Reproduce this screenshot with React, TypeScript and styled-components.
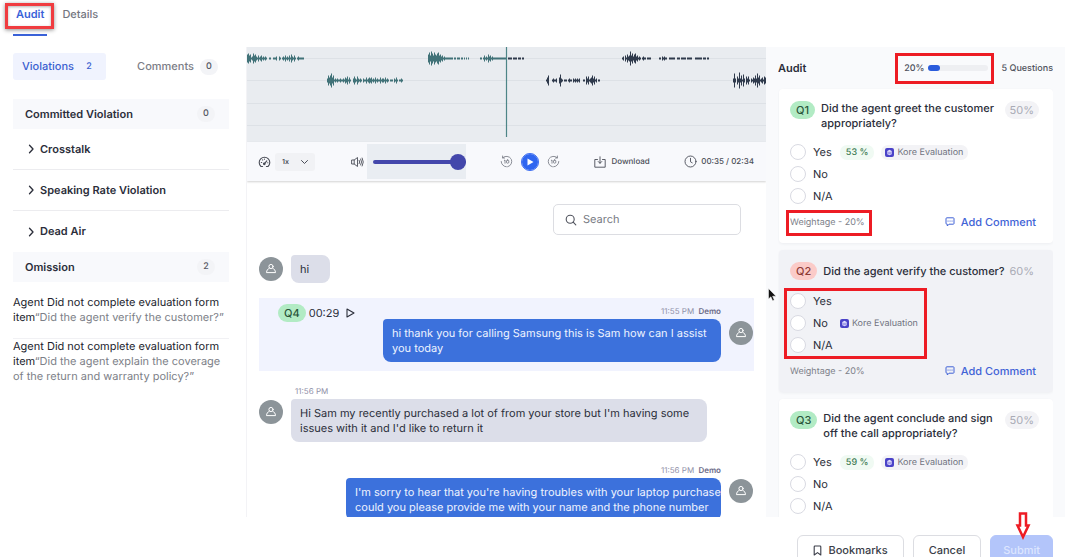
import React from "react";
import styled, { createGlobalStyle, css } from "styled-components";

const GlobalStyle = createGlobalStyle`
  *, *::before, *::after { box-sizing: border-box; }
  body {
    margin: 0;
    background: #fff;
    color: #2b2e3a;
    font-family: Inter, "Liberation Sans", sans-serif;
    font-size: 11px;
    line-height: 15px;
    text-rendering: geometricPrecision;
  }
  button, input, select { font: inherit; color: inherit; text-rendering: inherit; }
  button { cursor: pointer; }
  h2, h3, p, ul, fieldset { margin: 0; padding: 0; border: 0; font-size: inherit; }
  ul { list-style: none; }
`;

const Page = styled.div`
  display: flex;
  flex-direction: column;
  height: 100vh;
  overflow: hidden;
`;

/* ---------- shared ---------- */

const PlainButton = styled.button`
  display: inline-flex;
  align-items: center;
  padding: 0;
  border: 0;
  background: none;
`;

const Callout = styled.span<{ $inset: string; $soft?: boolean }>`
  position: absolute;
  inset: ${(p) => p.$inset};
  border: 3px solid ${(p) => (p.$soft ? "#f03c40" : "#ed1c24")};
  ${(p) => p.$soft && css`box-shadow: 0 1px 4px rgba(0, 0, 0, 0.45), inset 0 1px 3px rgba(0, 0, 0, 0.3);`}
  pointer-events: none;
`;

const Tag = styled.span<{ $tone: "green" | "red" }>`
  flex: none;
  padding: 0 6px;
  border-radius: 9px;
  line-height: 18px;
  font-weight: 500;
  color: ${(p) => (p.$tone === "green" ? "#28543a" : "#8d3a36")};
  background: ${(p) => (p.$tone === "green" ? "#b2ebc4" : "#fbcbc8")};
`;

/* ---------- top tabs ---------- */

const TopTabs = styled.nav`
  display: flex;
  flex: none;
  gap: 15px;
  height: 47px;
  padding: 0 13px;
`;

const TopTab = styled.a<{ $active?: boolean }>`
  position: relative;
  height: 36px;
  padding: 7px ${(p) => (p.$active ? "3px" : "0")} 0;
  border-bottom: 2px solid ${(p) => (p.$active ? "#3a62d8" : "transparent")};
  color: ${(p) => (p.$active ? "#3a62d8" : "#74767f")};
  font-weight: ${(p) => (p.$active ? 600 : 500)};
  text-decoration: none;
`;

const Main = styled.main`
  display: grid;
  flex: 1;
  grid-template-columns: 246px minmax(0, 1fr) 299px;
  grid-template-rows: minmax(0, 1fr);
  min-height: 0;
`;

/* ---------- violations ---------- */

const Side = styled.aside`
  padding: 6px 17px 0 13px;
  overflow: hidden;
`;

const SubTabs = styled.div`
  display: flex;
  justify-content: space-between;
  margin-bottom: 19px;
`;

const SubTab = styled(PlainButton)<{ $active?: boolean }>`
  gap: 6px;
  height: 27px;
  padding: 0 ${(p) => (p.$active ? "8px" : "11px")} 0 9px;
  border-radius: 3px;
  color: ${(p) => (p.$active ? "#3a5fd0" : "#7b7d86")};
  background: ${(p) => (p.$active ? "#f0f3fe" : "transparent")};
  font-weight: 500;
`;

const Count = styled.span<{ $plain?: boolean }>`
  min-width: 18px;
  border-radius: 8px;
  font-size: 9px;
  line-height: 16px;
  text-align: center;
  font-weight: 500;
  color: ${(p) => (p.$plain ? "#3a5fd0" : "#555863")};
  background: ${(p) => (p.$plain ? "transparent" : "#f3f4f7")};
`;

const GroupHeader = styled.h2`
  display: flex;
  align-items: center;
  justify-content: space-between;
  height: 30px;
  padding: 0 14px 0 12px;
  background: #f8f9fc;
  font-weight: 600;
`;

const GroupRow = styled.li`
  display: flex;
  height: 41px;
  padding-left: 14px;
  &:not(:last-child) { border-bottom: 1px solid #ececef; }
`;

const GroupToggle = styled(PlainButton)`
  gap: 4px;
  font-weight: 600;
`;

const OmissionList = styled.ul`
  padding-top: 13px;
`;

const Omission = styled.li`
  padding-bottom: 13px;
  color: #7d7f88;
  & + & { border-top: 1px solid #f1f1f4; }
  b { font-weight: 400; color: #22242d; }
`;

/* ---------- player ---------- */

const Center = styled.section`
  display: flex;
  flex-direction: column;
  border-left: 1px solid #f3f3f6;
  overflow: hidden;
`;

const Wave = styled.svg`
  display: block;
  flex: none;
  width: 100%;
  height: 95px;
  background: #e9ecf0;
`;

const Controls = styled.div`
  display: flex;
  flex: none;
  align-items: center;
  height: 39px;
  padding: 0 12px 0 11px;
  background: #f8f9fc;
  box-shadow: 0 1px 2px rgba(0, 0, 0, 0.18);
  color: #4a4d57;
  svg { flex: none; }
`;

const SpeedBox = styled.label`
  display: flex;
  align-items: center;
  width: 40px;
  height: 18px;
  margin: 0 36px 0 4px;
  padding: 0 6px 0 7px;
  border-radius: 3px;
  background: #f1f2f5;
`;

const Speed = styled.select`
  flex: 1;
  min-width: 0;
  padding: 0;
  border: 0;
  appearance: none;
  background: none;
  font-size: 7px;
  font-weight: 600;
`;

const VolumeBox = styled.div`
  display: flex;
  align-items: center;
  height: 35px;
  width: 99px;
  margin-left: 3px;
  padding-left: 6px;
  background: #e9edf2;
`;

const Volume = styled.input`
  width: 93px;
  height: 16px;
  margin: 0;
  appearance: none;
  background: none;
  &::-webkit-slider-runnable-track {
    height: 4px;
    border-radius: 2px;
    background: #4347ab;
  }
  &::-webkit-slider-thumb {
    width: 16px;
    height: 16px;
    margin-top: -6px;
    appearance: none;
    border-radius: 50%;
    background: #4347ab;
  }
`;

const Transport = styled.div`
  display: flex;
  align-items: center;
  gap: 8px;
  margin-left: 34px;
  color: #70737d;
`;

const PlayButton = styled(PlainButton)`
  justify-content: center;
  width: 18px;
  height: 18px;
  border: 1px solid #c9d8ff;
  border-radius: 50%;
  outline: 1px solid #3c6df0;
  outline-offset: -1px;
  background: #2f66f0;
  color: #fff;
`;

const Download = styled(PlainButton)`
  gap: 5px;
  margin: 0 auto;
  font-size: 8px;
  font-weight: 500;
`;

const Time = styled.span`
  display: flex;
  align-items: center;
  gap: 4px;
  font-size: 8px;
  font-weight: 500;
`;

/* ---------- chat ---------- */

const SearchBox = styled.label`
  display: flex;
  flex: none;
  align-items: center;
  align-self: flex-end;
  gap: 6px;
  width: 188px;
  height: 31px;
  margin: 23px 25px 20px;
  padding: 0 11px;
  border: 1px solid #dcdde2;
  border-radius: 5px;
  color: #50535d;
`;

const SearchInput = styled.input`
  flex: 1;
  min-width: 0;
  padding: 0;
  border: 0;
  outline: 0;
  background: none;
  &::placeholder { color: #777a83; opacity: 1; }
`;

const Message = styled.div<{ $agent?: boolean; $marked?: boolean }>`
  display: flex;
  flex: none;
  flex-direction: ${(p) => (p.$agent ? "row-reverse" : "row")};
  gap: 8px;
  margin: 0 12px 15px;
  ${(p) => p.$agent && css`padding: 6px 1px 0 0;`}
  ${(p) => p.$marked && css`
    margin-bottom: 13px;
    padding-bottom: 9px;
    background: #f1f3fe;
  `}
`;

const Avatar = styled.span<{ $top: number }>`
  display: flex;
  flex: none;
  align-items: center;
  justify-content: center;
  width: 24px;
  height: 24px;
  margin-top: ${(p) => p.$top}px;
  border-radius: 50%;
  background: #8c9499;
  color: #fff;
`;

const Body = styled.div<{ $agent?: boolean }>`
  display: flex;
  flex-direction: column;
  align-items: ${(p) => (p.$agent ? "flex-end" : "flex-start")};
`;

const Meta = styled.span<{ $agent?: boolean }>`
  padding: 0 ${(p) => (p.$agent ? "0" : "4px")};
  color: #8f90a8;
  font-size: 8px;
  b { margin-left: 2px; font-weight: 600; color: #6d6c88; }
`;

const Bubble = styled.p<{ $agent?: boolean; $width?: number }>`
  width: ${(p) => (p.$width ? `${p.$width}px` : "auto")};
  padding: ${(p) => (p.$width ? "7px 0 6px 9px" : "7px 21px 6px 9px")};
  border-radius: 4px 8px 8px 8px;
  color: ${(p) => (p.$agent ? "#eef3ff" : "#2b2e3a")};
  background: ${(p) => (p.$agent ? "#3c71dc" : "#dcdee9")};
  white-space: pre;
`;

const Marker = styled.div`
  display: flex;
  align-items: center;
  align-self: flex-start;
  gap: 3px;
  margin-right: auto;
  padding-left: 19px;
  svg { margin-left: 4px; }
`;

/* ---------- audit form ---------- */

const Audit = styled.section`
  position: relative;
  padding: 0 12px;
  background: #f9fafc;
`;

const Clip = styled.div`
  height: 100%;
  overflow: hidden;
`;

const AuditHeader = styled.header`
  display: flex;
  align-items: center;
  height: 42px;
  h2 { margin-right: auto; font-weight: 600; }
`;

const Progress = styled.div`
  position: relative;
  display: flex;
  align-items: center;
  gap: 3px;
  margin-right: 14px;
  color: #4f525d;
  font-size: 9px;
  font-weight: 500;
`;

const Bar = styled.span`
  width: 60px;
  height: 6px;
  border-radius: 3px;
  background: #eeeff2;
`;

const BarFill = styled.span`
  display: block;
  height: 100%;
  border-radius: 3px;
  background: #2a5cdc;
`;

const Total = styled.span`
  color: #50535d;
  font-size: 9px;
  font-weight: 500;
`;

const Card = styled.article<{ $shaded?: boolean }>`
  margin: 0 0 7px 1px;
  padding: 12px 14px 12px 11px;
  border-radius: 4px;
  background: ${(p) => (p.$shaded ? "#f1f2f6" : "#fff")};
  box-shadow: 0 1px 3px rgba(40, 44, 60, 0.06);
`;

const Question = styled.header`
  display: flex;
  align-items: flex-start;
  gap: 6px;
  margin-bottom: 10px;
`;

const QuestionTitle = styled.h3<{ $single?: boolean }>`
  flex: 1;
  min-width: 0;
  font-weight: 500;
  ${(p) => p.$single && css`
    line-height: 18px;
    white-space: nowrap;
  `}
`;

const Score = styled.span<{ $bare?: boolean }>`
  padding: 0 5px;
  border-radius: 9px;
  line-height: 18px;
  color: #a9abb5;
  background: ${(p) => (p.$bare ? "none" : "#f3f3f6")};
`;

const Options = styled.fieldset`
  position: relative;
  min-width: 0;
`;

const Option = styled.div`
  display: flex;
  align-items: center;
  height: 22px;
  label { display: flex; align-items: center; gap: 7px; }
`;

const Radio = styled.input`
  width: 16px;
  height: 16px;
  margin: 0;
  border: 1px solid #d9dae2;
  border-radius: 50%;
  appearance: none;
  background: #fff;
`;

const Match = styled.span`
  margin-left: 8px;
  padding: 0 6px;
  border-radius: 7px;
  background: #f0faf3;
  color: #3d7a52;
  font-size: 9px;
  font-weight: 500;
`;

const Source = styled.span<{ $bare?: boolean }>`
  display: flex;
  align-items: center;
  gap: 3px;
  margin-left: ${(p) => (p.$bare ? 8 : 7)}px;
  padding: 0 5px 0 4px;
  border-radius: 7px;
  background: ${(p) => (p.$bare ? "none" : "#f3f3f6")};
  color: #70737f;
  font-size: 9px;
`;

const CardFooter = styled.footer`
  display: flex;
  align-items: center;
  justify-content: space-between;
  height: 18px;
  margin-top: 6px;
`;

const Weight = styled.span`
  position: relative;
  color: #7d8089;
  font-size: 9px;
`;

const AddComment = styled(PlainButton)`
  gap: 6px;
  margin-right: 3px;
  color: #4163d6;
  font-weight: 500;
`;

/* ---------- footer ---------- */

const Actions = styled.footer`
  display: flex;
  flex: none;
  justify-content: flex-end;
  gap: 9px;
  height: 40px;
  padding: 18px 12px 0;
`;

const Action = styled.button<{ $primary?: boolean; $pad: number }>`
  position: relative;
  display: flex;
  flex: none;
  align-items: center;
  gap: 6px;
  height: 31px;
  padding: 0 ${(p) => p.$pad}px;
  border: 1px solid ${(p) => (p.$primary ? "#b3c5fa" : "#dcdde2")};
  border-radius: 6px;
  color: ${(p) => (p.$primary ? "#dde6ff" : "#3a3d48")};
  background: ${(p) => (p.$primary ? "#b3c5fa" : "#fff")};
  font-weight: 500;
`;

const Arrow = styled.svg`
  position: absolute;
  top: -24px;
  left: 25px;
  overflow: visible;
`;

const Cursor = styled.svg`
  position: absolute;
  top: 241px;
  left: 2px;
`;

/* ---------- drawings ---------- */

const line = { fill: "none", stroke: "currentColor", strokeLinecap: "round" as const, strokeLinejoin: "round" as const };

const Chevron = ({ down }: { down?: boolean }) => (
  <svg width="9" height="10" viewBox="0 0 9 10" {...line} strokeWidth={down ? 1 : 1.3}>
    <path d={down ? "M1.5 3.5 4.5 6.5 7.5 3.5" : "M2.5 1.2 6 5 2.5 8.8"} />
  </svg>
);

const PersonIcon = () => (
  <svg width="12" height="12" viewBox="0 0 12 12" {...line} strokeWidth="1">
    <circle cx="6" cy="3.5" r="2.1" />
    <path d="M4.3 5.2C2.6 6 1.6 7.5 1.5 9.6h9C10.4 7.5 9.4 6 7.7 5.2" />
  </svg>
);

const GaugeIcon = () => (
  <svg width="13" height="12" viewBox="0 0 13 12" {...line} strokeWidth="1.1">
    <path d="M3 10.5A5.3 5.3 0 1 1 10 10.5M3 10.5h1.600M10 10.5H8.400M6.500 7.600 8.800 4.800M3.300 6.500h.4M4.500 3.800l.2.2M6.500 3v.3M9.700 6.700h.2" />
    <circle cx="6.3" cy="7.8" r="0.8" fill="currentColor" />
  </svg>
);

const SpeakerIcon = () => (
  <svg width="13" height="12" viewBox="0 0 13 12" {...line} strokeWidth="0.9">
    <path d="M1 4h2.2L6.500 1.500v9L3.200 8H1zM3.200 4v4M8.200 4.300q1 1.700 0 3.400M9.700 3q1.900 3 0 6M11.200 2q2.300 4 0 8" />
  </svg>
);

const SkipIcon = ({ back }: { back?: boolean }) => (
  <svg width="13" height="13" viewBox="0 0 13 13" {...line} strokeWidth="0.8">
    <path d={back ? "M2.8 2.700A5.300 5.300 0 1 1 1.200 6.500M2.600 1v2h2" : "M10.200 2.700A5.300 5.300 0 1 0 11.800 6.500M10.400 1v2h-2"} strokeDasharray="9 1.200" />
    <path d="M4.300 5.400 5 5v3.200" />
    <rect x="6.500" y="5" width="2.300" height="3.200" rx="1" />
  </svg>
);

const DownloadIcon = () => (
  <svg width="12" height="12" viewBox="0 0 12 12" {...line} strokeWidth="0.9">
    <path d="M3.500 3.500H.8v7.700h10.400V3.500H8.500M6 .8v6.400M4.200 5.500 6 7.300l1.800-1.800" />
  </svg>
);

const ClockIcon = () => (
  <svg width="13" height="13" viewBox="0 0 13 13" {...line} strokeWidth="0.9">
    <circle cx="6.5" cy="6.5" r="5.5" />
    <path d="M6.500 3.300v3.500l1.700 1" />
  </svg>
);

const SearchIcon = () => (
  <svg width="12" height="12" viewBox="0 0 12 12" {...line} strokeWidth="1.1">
    <circle cx="5.2" cy="5.2" r="4" />
    <path d="m8.200 8.200 2.600 2.600" />
  </svg>
);

const KoreIcon = () => (
  <svg width="9" height="9" viewBox="0 0 9 9">
    <rect width="9" height="9" rx="2" fill="#4a42c8" />
    <path d="M2.300 3 4.500 1.800 6.700 3v3.200L4.500 7.300 2.300 6.200z" fill="#e4e2ff" />
    <path d="M2.800 4.300h3.400M2.800 5.700h3.400" stroke="#4a42c8" strokeWidth="0.5" />
  </svg>
);

const CommentIcon = () => (
  <svg width="10" height="10" viewBox="0 0 10 10" {...line} strokeWidth="1">
    <path d="M1 1.500q0-.7.700-.7h6.600q.7 0 .7.700v5q0 .7-.7.700H4L2.300 9V7.200h-.6Q1 7.200 1 6.500z" />
    <path d="M3 4h.1M5 4h.1M7 4h.1" strokeWidth="1.2" />
  </svg>
);

const BookmarkIcon = () => (
  <svg width="9" height="11" viewBox="0 0 9 11" {...line} strokeWidth="1.1">
    <path d="M1.200 1.800q0-.8.800-.8h5q.8 0 .8.800V10L4.500 7.600 1.200 10z" />
  </svg>
);

/* Half-heights of consecutive bars, drawn at a fixed stride along a channel. */
type Burst = { x: number; y: number; color: string; bars: number[] };

const TEAL = "#417278";
const NAVY = "#2f3a4c";

const bursts: Burst[] = [
  { x: 1, y: 11, color: TEAL, bars: [4, 5, 3, 4, 1, 2, 5, 3, 4, 2, 1, 3, 1, 2, 3, 1, 2, 1, 2, 1, 0, 0, 1, 1, 0, 0, 1, 1, 1, 2, 0, 0, 2, 1, 0, 1, 2, 1, 3, 1, 2, 1, 3, 1, 4, 2, 1, 3, 1, 0, 1, 2, 1, 1, 1, 1, 1] },
  { x: 81, y: 33, color: TEAL, bars: [2, 5, 3, 5, 7, 3, 5, 1, 2, 1, 2, 1, 1, 2, 1, 1, 2, 1, 3, 2, 4, 1, 3, 1, 0, 0, 2, 4, 2, 1, 4, 2, 1, 2, 1, 0, 2, 1, 1, 3, 1, 2, 3, 2, 3, 1, 2, 1, 3, 1, 2, 1, 1, 3, 1, 2, 2, 1, 3, 1, 2, 1, 0, 1, 1, 1, 0, 2, 1, 3, 1, 0, 1, 1, 2, 1] },
  { x: 182, y: 11, color: TEAL, bars: [4, 6, 3, 7, 5, 3, 6, 4, 3, 5, 6, 3, 4, 2, 3, 1, 2, 1, 1, 1, 1, 1, 1, 1, 1, 0, 1, 1, 0, 1, 1, 1, 0, 1, 1, 0, 1, 0, 1, 0, 1, 0] },
  { x: 234, y: 11, color: TEAL, bars: [1, 1, 0, 1, 3, 1, 2, 1, 4, 2, 3, 1, 2, 1, 1, 1, 1, 1, 1, 1, 1, 1, 1, 1, 1, 1] },
  { x: 260, y: 11, color: NAVY, bars: [1, 0, 1, 1, 1, 1, 0, 1, 1, 1, 1, 0, 1, 1, 1, 0, 1, 1] },
  { x: 300, y: 33, color: NAVY, bars: [1, 3, 5, 0, 0, 0, 1, 2, 1, 1, 2, 0, 0, 3, 6, 2, 1, 0, 1, 1, 1, 0, 1, 2, 1, 1, 0, 2, 1, 2, 1, 2, 1, 2, 0, 0, 0, 1, 1, 0, 4, 2, 4, 1, 2, 3, 5, 2, 4, 1, 2, 0, 1, 1] },
  { x: 376, y: 11, color: NAVY, bars: [1, 2, 0, 3, 1, 4, 2, 3, 7, 3, 5, 2, 4, 5, 2, 3, 1, 2, 1, 0, 1, 2, 1, 1, 0, 1, 1, 1, 1] },
  { x: 413, y: 11, color: NAVY, bars: [1, 1, 0, 2, 1, 2, 1, 1, 0, 0, 1, 1, 1, 1, 1, 1, 0, 0, 1, 1, 1, 0, 1, 1, 1, 1, 1, 0, 1, 1, 1, 1, 1, 0, 0, 0, 1, 1, 1, 1, 1, 1, 1, 0, 1, 1, 1, 0, 1, 1] },
  { x: 487, y: 33, color: NAVY, bars: [2, 7, 2, 0, 4, 2, 8, 2, 5, 1, 6, 2, 0, 4, 2, 4, 1, 0, 2, 1, 3, 2, 5, 2, 7, 3, 5, 1, 2, 3, 1, 4, 3] },
];

const Waveform = () => (
  <Wave viewBox="0 0 519 95" preserveAspectRatio="none" role="img" aria-label="Call waveform">
    {[11, 33, 56, 78].map((y) => (
      <path key={y} d={`M0 ${y + 0.5}H519`} stroke="#dde1e6" />
    ))}
    {bursts.map((b) => (
      <path
        key={`${b.x}-${b.y}`}
        stroke={b.color}
        d={b.bars
          .map((h, i) => (h ? `M${b.x + i - 0.5} ${b.y - h + 0.5}V${b.y + h + 0.5}` : ""))
          .join("")}
      />
    ))}
    <path d="M259.500 0V90" stroke="#4d8587" strokeWidth="1.2" />
  </Wave>
);

/* ---------- data ---------- */

type Item = {
  id: string;
  title: string;
  score: string;
  tone: "green" | "red";
  shaded?: boolean;
  match?: string;
  source: string;
  markOptions?: boolean;
  markWeight?: boolean;
};

const questions: Item[] = [
  { id: "Q1", title: "Did the agent greet the customer appropriately?", score: "50%", tone: "green", match: "53 %", source: "Yes", markWeight: true },
  { id: "Q2", title: "Did the agent verify the customer?", score: "60%", tone: "red", shaded: true, source: "No", markOptions: true },
  { id: "Q3", title: "Did the agent conclude and sign off the call appropriately?", score: "50%", tone: "green", match: "59 %", source: "Yes" },
];

const QuestionCard = ({ q }: { q: Item }) => (
  <Card $shaded={q.shaded}>
    <Question>
      <Tag $tone={q.tone}>{q.id}</Tag>
      <QuestionTitle $single={q.shaded}>{q.title}</QuestionTitle>
      <Score $bare={q.shaded}>{q.score}</Score>
    </Question>
    <Options aria-label={q.title}>
      {["Yes", "No", "N/A"].map((name) => (
        <Option key={name}>
          <label>
            <Radio type="radio" name={q.id} />
            {name}
          </label>
          {q.source === name && (
            <>
              {q.match && <Match>{q.match}</Match>}
              <Source $bare={q.shaded}>
                <KoreIcon />
                Kore Evaluation
              </Source>
            </>
          )}
        </Option>
      ))}
      {q.markOptions && <Callout $inset="-2px 112px -3px -6px" />}
    </Options>
    <CardFooter>
      <Weight>
        Weightage - 20%
        {q.markWeight && <Callout $inset="-5px -7px -6px -4px" />}
      </Weight>
      <AddComment type="button">
        <CommentIcon />
        Add Comment
      </AddComment>
    </CardFooter>
  </Card>
);

export default function App() {
  return (
    <Page>
      <GlobalStyle />
      <TopTabs>
        <TopTab href="#audit" $active>
          Audit
          <Callout $inset="3px -7px 5px -8px" $soft />
        </TopTab>
        <TopTab href="#details">Details</TopTab>
      </TopTabs>

      <Main>
        <Side>
          <SubTabs>
            <SubTab type="button" $active>
              Violations <Count $plain>2</Count>
            </SubTab>
            <SubTab type="button">
              Comments <Count>0</Count>
            </SubTab>
          </SubTabs>
          <GroupHeader>
            Committed Violation <Count>0</Count>
          </GroupHeader>
          <ul>
            {["Crosstalk", "Speaking Rate Violation", "Dead Air"].map((name) => (
              <GroupRow key={name}>
                <GroupToggle type="button">
                  <Chevron />
                  {name}
                </GroupToggle>
              </GroupRow>
            ))}
          </ul>
          <GroupHeader>
            Omission <Count>2</Count>
          </GroupHeader>
          <OmissionList>
            {["Did the agent verify the customer?", "Did the agent explain the coverage of the return and warranty policy?"].map((text) => (
              <Omission key={text}>
                <b>Agent Did not complete evaluation form item</b>
                {`“${text}”`}
              </Omission>
            ))}
          </OmissionList>
        </Side>

        <Center>
          <Waveform />
          <Controls>
            <GaugeIcon />
            <SpeedBox>
              <Speed aria-label="Playback speed">
                <option>1x</option>
              </Speed>
              <Chevron down />
            </SpeedBox>
            <SpeakerIcon />
            <VolumeBox>
              <Volume type="range" defaultValue={100} aria-label="Volume" />
            </VolumeBox>
            <Transport>
              <PlainButton type="button" aria-label="Back 10 seconds">
                <SkipIcon back />
              </PlainButton>
              <PlayButton type="button" aria-label="Play">
                <svg width="8" height="8" viewBox="0 0 8 8" fill="currentColor">
                  <path d="M1.500.5 7.500 4l-6 3.500z" />
                </svg>
              </PlayButton>
              <PlainButton type="button" aria-label="Forward 10 seconds">
                <SkipIcon />
              </PlainButton>
            </Transport>
            <Download type="button">
              <DownloadIcon />
              Download
            </Download>
            <Time>
              <ClockIcon />
              00:35 / 02:34
            </Time>
          </Controls>

          <SearchBox>
            <SearchIcon />
            <SearchInput type="search" placeholder="Search" aria-label="Search" />
          </SearchBox>

          <Message>
            <Avatar $top={2}>
              <PersonIcon />
            </Avatar>
            <Body>
              <Bubble>hi</Bubble>
            </Body>
          </Message>

          <Message $agent $marked>
            <Avatar $top={17}>
              <PersonIcon />
            </Avatar>
            <Body $agent>
              <Meta $agent>
                11:55 PM <b>Demo</b>
              </Meta>
              <Bubble $agent $width={338}>
                {"hi thank you for calling Samsung this is Sam how can I assist\nyou today"}
              </Bubble>
            </Body>
            <Marker>
              <Tag $tone="green">Q4</Tag>
              00:29
              <svg width="9" height="10" viewBox="0 0 9 10" {...line} strokeWidth="1.1">
                <path d="M1 1 8 5 1 9z" />
              </svg>
            </Marker>
          </Message>

          <Message>
            <Avatar $top={16}>
              <PersonIcon />
            </Avatar>
            <Body>
              <Meta>11:56 PM</Meta>
              <Bubble $width={416}>
                {"Hi Sam my recently purchased a lot of from your store but I'm having some\nissues with it and I'd like to return it"}
              </Bubble>
            </Body>
          </Message>

          <Message $agent>
            <Avatar $top={16}>
              <PersonIcon />
            </Avatar>
            <Body $agent>
              <Meta $agent>
                11:56 PM <b>Demo</b>
              </Meta>
              <Bubble $agent $width={375}>
                {"I'm sorry to hear that you're having troubles with your laptop purchase\ncould you please provide me with your name and the phone number"}
              </Bubble>
            </Body>
          </Message>
        </Center>

        <Audit>
          <Clip>
            <AuditHeader>
              <h2>Audit</h2>
              <Progress>
                20%
                <Bar>
                  <BarFill style={{ width: "20%" }} />
                </Bar>
                <Callout $inset="-8px -6px -8px -9px" />
              </Progress>
              <Total>5 Questions</Total>
            </AuditHeader>
            {questions.map((q) => (
              <QuestionCard key={q.id} q={q} />
            ))}
          </Clip>
          <Cursor width="9" height="14" viewBox="0 0 9 14">
            <path d="M.5.5v10.500l2.400-2.200 1.700 4 1.700-.8L4.600 8.200H8z" fill="#111" stroke="#fff" strokeWidth="0.5" />
          </Cursor>
        </Audit>
      </Main>

      <Actions>
        <Action type="button" $pad={15}>
          <BookmarkIcon />
          Bookmarks
        </Action>
        <Action type="button" $pad={15}>
          Cancel
        </Action>
        <Action type="button" $primary $pad={12}>
          Submit
          <Arrow width="14" height="27" viewBox="0 0 14 27" aria-hidden="true">
            <path d="M4 1.500h6v12h2.500L7 25 1.500 13.500H4z" fill="#fff" stroke="#ed1c24" strokeWidth="2.5" />
          </Arrow>
        </Action>
      </Actions>
    </Page>
  );
}
